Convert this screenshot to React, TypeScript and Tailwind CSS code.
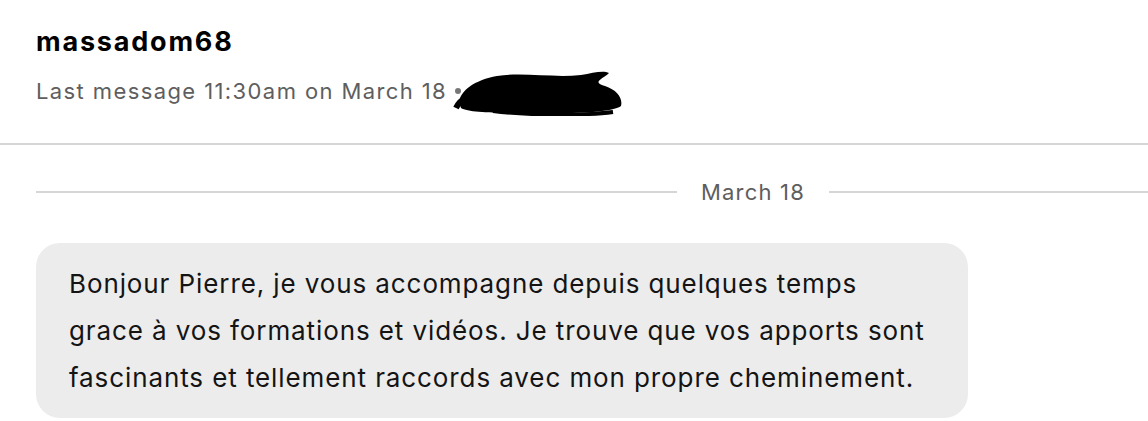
import React from "react";

const Redacted = () => (
  <svg width="172" height="46" viewBox="0 0 172 46" className="-ml-[8px] -my-2 translate-y-[2px]">
    <path
      d="M6 32 C8 20 22 10 44 6 C70 2 100 8 128 5 C140 3 150 0 156 3 C150 9 138 12 152 16 C164 20 170 28 168 36 C160 42 124 44 80 43 C46 43 16 43 8 38 Z"
      fill="#000"
    />
    <path d="M3 38 C8 28 14 28 18 33" stroke="#000" strokeWidth="6" fill="none" />
    <path d="M40 41 C70 45 130 46 160 42" stroke="#000" strokeWidth="4" fill="none" />
  </svg>
);

export const App = () => {
  return (
    <div className="w-[1148px] h-[421px] bg-white overflow-hidden font-['Inter',sans-serif]">
      <div className="px-9 pt-6 pb-[37px] border-b-2 border-[#d6d6d6]">
        <h1 className="text-[27px] font-bold text-black leading-[36px] tracking-[1.8px]">
          massadom68
        </h1>
        <div className="flex items-center mt-4 h-[30px] text-[22px] text-[#5e5e5e] leading-[30px] tracking-[1.4px]">
          <span>Last message 11:30am on March 18</span>
          <span className="ml-2 w-[6px] h-[6px] rounded-full bg-[#777]" />
          <Redacted />
        </div>
      </div>
      <div className="pl-9 pt-[32px]">
        <div className="flex items-center">
          <div className="flex-1 h-[2px] bg-[#d6d6d6]" />
          <span className="mx-6 text-[22px] text-[#5e5e5e] leading-[30px] tracking-[1.2px]">
            March 18
          </span>
          <div className="w-[319px] h-[2px] bg-[#d6d6d6]" />
        </div>
        <div className="mt-[36px] w-[932px] rounded-[24px] bg-[#ececec] pl-[33px] pr-6 py-[17px]">
          <p className="text-[26px] leading-[47px] text-[#141414] tracking-[0.9px]">
            Bonjour Pierre, je vous accompagne depuis quelques temps
            <br />
            grace à vos formations et vidéos. Je trouve que vos apports sont
            <br />
            fascinants et tellement raccords avec mon propre cheminement.
          </p>
        </div>
      </div>
    </div>
  );
};

export default App;
